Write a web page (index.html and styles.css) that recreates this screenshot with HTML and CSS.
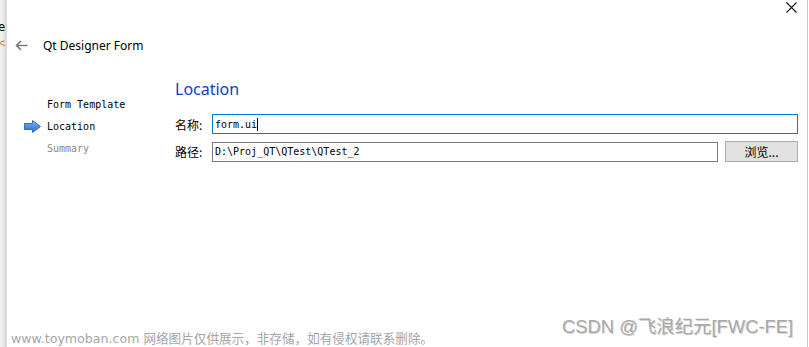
FILE: index.html
```html
<!DOCTYPE html>
<html lang="zh">
<head>
<meta charset="utf-8">
<title>Qt Designer Form</title>
<link rel="stylesheet" href="styles.css">
</head>
<body>
<div class="strip">
  <span class="strip-e">e</span>
  <span class="strip-lt">&lt;</span>
</div>
<div class="window">
  <div class="titlebar">
    <svg class="close" width="11" height="11" viewBox="0 0 11 11"><path d="M0.5 0.5 L10.5 10.5 M10.5 0.5 L0.5 10.5" stroke="#111" stroke-width="1.1" fill="none"/></svg>
  </div>
  <div class="header">
    <svg class="back" width="13" height="11" viewBox="0 0 13 11"><path d="M12.5 5.5 H1.5 M6 1 L1.5 5.5 L6 10" stroke="#7a7a7a" stroke-width="1.6" fill="none"/></svg>
    <span class="title">Qt Designer Form</span>
  </div>
  <div class="content">
    <ul class="steps">
      <li class="step"><span class="slot"></span>Form Template</li>
      <li class="step current"><span class="slot"><svg width="18" height="13" viewBox="0 0 18 13"><defs><linearGradient id="g" x1="0" y1="0" x2="0" y2="1"><stop offset="0" stop-color="#8fbff5"/><stop offset="0.5" stop-color="#4c8fe6"/><stop offset="1" stop-color="#2f6fd0"/></linearGradient></defs><path d="M0.5 3.5 H8.5 V0.5 L16.5 6.5 L8.5 12.5 V9.5 H0.5 Z" fill="url(#g)" stroke="#3a6ab8" stroke-width="1"/></svg></span>Location</li>
      <li class="step pending"><span class="slot"></span>Summary</li>
    </ul>
    <div class="main">
      <h1 class="heading">Location</h1>
      <div class="row">
        <span class="label">名称:</span>
        <div class="field focused"><span class="val">form.ui</span><span class="caret"></span></div>
      </div>
      <div class="row">
        <span class="label">路径:</span>
        <div class="field"><span class="val">D:\Proj_QT\QTest\QTest_2</span></div>
        <button class="browse">浏览...</button>
      </div>
    </div>
  </div>
</div>
<div class="wm-left">www.toymoban.com 网络图片仅供展示，非存储，如有侵权请联系删除。</div>
<div class="wm-right">CSDN @飞浪纪元[FWC-FE]</div>
</body>
</html>
```
FILE: styles.css
```css
html, body {
  margin: 0;
  padding: 0;
}
body {
  width: 809px;
  height: 347px;
  overflow: hidden;
  background: #fff;
  display: flex;
  position: relative;
  font-family: "Noto Sans", "Noto Sans CJK SC", sans-serif;
}
.strip {
  width: 7px;
  flex: none;
  background: linear-gradient(to right, #f3f3f3 0, #e6e6e6 4px, #d2d2d2 6px, #e8e8e8 7px);
  display: flex;
  flex-direction: column;
  overflow: hidden;
  font-family: "DejaVu Sans Mono", monospace;
  font-size: 12px;
}
.strip-e {
  margin-top: 19px;
  margin-left: -2px;
  line-height: 16px;
  color: #000;
}
.strip-lt {
  margin-left: -2px;
  line-height: 16px;
  color: #c49a2c;
}
.window {
  flex: 1;
  display: flex;
  flex-direction: column;
  border-right: 1px solid #c8c8c8;
  margin-right: 1px;
}
.titlebar {
  height: 30px;
  display: flex;
  justify-content: flex-end;
  align-items: flex-start;
  padding-right: 10px;
}
.close {
  margin-top: 2px;
}
.header {
  height: 30px;
  display: flex;
  align-items: center;
  padding-left: 8px;
}
.back {
  margin-right: 15px;
}
.title {
  font-size: 12px;
  color: #000;
}
.content {
  display: flex;
  flex: 1;
}
.steps {
  list-style: none;
  margin: 0;
  padding: 33px 0 0 17px;
  width: 151px;
  font-family: "DejaVu Sans Mono", monospace;
  font-size: 10px;
  color: #000;
}
.step {
  height: 22px;
  display: flex;
  align-items: center;
}
.slot {
  width: 23px;
  display: flex;
  align-items: center;
}
.step.pending {
  color: #8a8a8a;
}
.main {
  flex: 1;
  padding: 19px 9px 0 0;
}
.heading {
  margin: 0 0 15px 0;
  font-size: 16px;
  font-weight: normal;
  line-height: 20px;
  color: #0a3fcc;
}
.row {
  display: flex;
  align-items: center;
  margin-bottom: 7px;
}
.label {
  width: 37px;
  font-size: 12px;
  font-family: "Noto Sans CJK SC", sans-serif;
  color: #000;
}
.field {
  flex: 1;
  border: 1px solid #7a7a7a;
  display: flex;
  align-items: center;
  padding-left: 2px;
  font-family: "DejaVu Sans Mono", monospace;
  font-size: 10px;
  color: #000;
  box-sizing: border-box;
  height: 20px;
}
.field.focused {
  border-color: #0078d7;
}
.caret {
  width: 1px;
  height: 13px;
  background: #000;
}
.browse {
  margin-left: 7px;
  width: 73px;
  height: 21px;
  box-sizing: border-box;
  border: 1px solid #adadad;
  background: #e1e1e1;
  font-family: "Noto Sans CJK SC", sans-serif;
  font-size: 12px;
  color: #000;
  padding: 0;
}
.wm-left {
  position: absolute;
  left: 11px;
  top: 330px;
  font-family: "DejaVu Sans", "Noto Sans CJK SC", sans-serif;
  font-size: 12.6px;
  line-height: 18px;
  color: #a6a6a6;
  white-space: nowrap;
}
.wm-right {
  position: absolute;
  left: 562px;
  top: 315px;
  font-family: "Liberation Sans", "Noto Sans CJK SC", sans-serif;
  font-size: 18.4px;
  line-height: 24px;
  color: #a8a8a8;
  text-shadow: 1px 1px 0 rgba(90, 90, 90, 0.25);
  white-space: nowrap;
}
```
